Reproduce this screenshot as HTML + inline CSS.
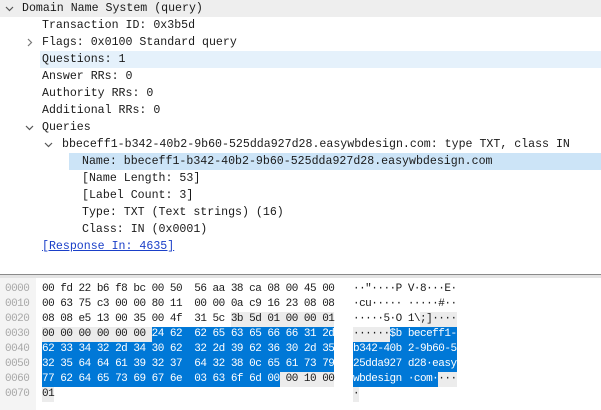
<!DOCTYPE html>
<html><head><meta charset="utf-8"><style>
*{margin:0;padding:0}
body{width:601px;height:410px;background:#fff;position:relative;overflow:hidden;font-family:"Liberation Mono",monospace;color:#1a1a1a}
.r{position:absolute;left:0;width:601px;height:17px;line-height:17px;font-size:11.6px;white-space:pre}
.t{position:absolute;top:0}
.ch{position:absolute;top:4px}
.h{position:absolute;left:0;width:601px;height:15px;line-height:15px;font-size:11px;letter-spacing:-0.51px;white-space:pre}
.off{position:absolute;left:5px;color:#a8a8a8}
.hx{position:absolute;left:42px;height:15px}
.as{position:absolute;left:353px;height:15px}
.b{background:#0078d7;color:#fff;display:inline-block;height:15px}
.g{background:#ececec;display:inline-block;height:15px}
</style></head><body>
<div class="r" style="top:0;background:#eeeeee"><svg class="ch" style="left:5px" width="9" height="9"><path d="M1 3 L4.5 6.5 L8 3" stroke="#555" fill="none" stroke-width="1.2"/></svg><span class="t" style="left:22px">Domain Name System (query)</span></div>
<div class="r" style="top:17px"><span class="t" style="left:42px">Transaction ID: 0x3b5d</span></div>
<div class="r" style="top:34px"><svg class="ch" style="left:25px" width="9" height="9"><path d="M3 1 L6.5 4.5 L3 8" stroke="#777" fill="none" stroke-width="1.2"/></svg><span class="t" style="left:42px">Flags: 0x0100 Standard query</span></div>
<div class="r" style="top:51px;left:40px;width:561px;background:#e5f1fb"><span class="t" style="left:2px">Questions: 1</span></div>
<div class="r" style="top:68px"><span class="t" style="left:42px">Answer RRs: 0</span></div>
<div class="r" style="top:85px"><span class="t" style="left:42px">Authority RRs: 0</span></div>
<div class="r" style="top:102px"><span class="t" style="left:42px">Additional RRs: 0</span></div>
<div class="r" style="top:119px"><svg class="ch" style="left:25px" width="9" height="9"><path d="M1 3 L4.5 6.5 L8 3" stroke="#555" fill="none" stroke-width="1.2"/></svg><span class="t" style="left:42px">Queries</span></div>
<div class="r" style="top:136px"><svg class="ch" style="left:44px" width="9" height="9"><path d="M1 3 L4.5 6.5 L8 3" stroke="#555" fill="none" stroke-width="1.2"/></svg><span class="t" style="left:62px">bbeceff1-b342-40b2-9b60-525dda927d28.easywbdesign.com: type TXT, class IN</span></div>
<div class="r" style="top:153px;left:69px;width:532px;background:#cce4f7"><span class="t" style="left:13px">Name: bbeceff1-b342-40b2-9b60-525dda927d28.easywbdesign.com</span></div>
<div class="r" style="top:170px"><span class="t" style="left:82px">[Name Length: 53]</span></div>
<div class="r" style="top:187px"><span class="t" style="left:82px">[Label Count: 3]</span></div>
<div class="r" style="top:204px"><span class="t" style="left:82px">Type: TXT (Text strings) (16)</span></div>
<div class="r" style="top:221px"><span class="t" style="left:82px">Class: IN (0x0001)</span></div>
<div class="r" style="top:238px"><span class="t" style="left:42px;color:#1a3fc8;text-decoration:underline">[Response In: 4635]</span></div>
<div style="position:absolute;top:274px;left:0;width:601px;height:1px;background:#8a8a8a"></div>
<div style="position:absolute;top:275px;left:0;width:601px;height:3px;background:#e4e4e4"></div>
<div style="position:absolute;top:278px;left:0;width:36px;height:132px;background:#f4f4f4"></div>
<div class="h" style="top:282px"><span class="off">0000</span><span class="hx">00 fd 22 b6 f8 bc 00 50  56 aa 38 ca 08 00 45 00</span><span class="as">··"····P V·8···E·</span></div>
<div class="h" style="top:297px"><span class="off">0010</span><span class="hx">00 63 75 c3 00 00 80 11  00 00 0a c9 16 23 08 08</span><span class="as">·cu····· ·····#··</span></div>
<div class="h" style="top:312px"><span class="off">0020</span><span class="hx">08 08 e5 13 00 35 00 4f  31 5c <span class="g">3b 5d 01 00 00 01</span></span><span class="as">·····5·O 1\<span class="g">;]····</span></span></div>
<div class="h" style="top:327px"><span class="off">0030</span><span class="hx"><span class="g">00 00 00 00 00 00 </span><span class="b">24 62  62 65 63 65 66 66 31 2d</span></span><span class="as"><span class="g">······</span><span class="b">$b beceff1-</span></span></div>
<div class="h" style="top:342px"><span class="off">0040</span><span class="hx"><span class="b">62 33 34 32 2d 34 30 62  32 2d 39 62 36 30 2d 35</span></span><span class="as"><span class="b">b342-40b 2-9b60-5</span></span></div>
<div class="h" style="top:357px"><span class="off">0050</span><span class="hx"><span class="b">32 35 64 64 61 39 32 37  64 32 38 0c 65 61 73 79</span></span><span class="as"><span class="b">25dda927 d28·easy</span></span></div>
<div class="h" style="top:372px"><span class="off">0060</span><span class="hx"><span class="b">77 62 64 65 73 69 67 6e  03 63 6f 6d 00</span><span class="g"> 00 10 00</span></span><span class="as"><span class="b">wbdesign ·com·</span><span class="g">···</span></span></div>
<div class="h" style="top:387px"><span class="off">0070</span><span class="hx"><span class="g">01</span></span><span class="as"><span class="g">·</span></span></div>
</body></html>
